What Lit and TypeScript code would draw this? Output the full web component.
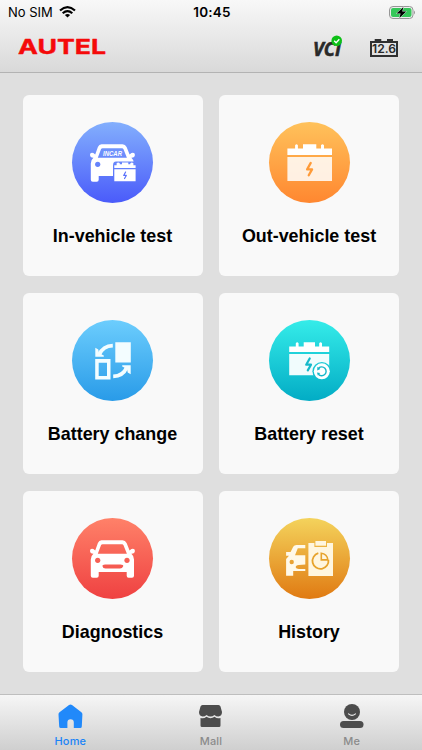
import { LitElement, html, css, svg } from "lit";
import { customElement } from "lit/decorators.js";

const bolt = (x: number, y: number, color: string, s = 1) => svg`
  <path transform="translate(${x} ${y}) scale(${s})" d="M1.2-6.5 L-2.6 .3 H2.6 L-.9 6.5" fill="none" stroke=${color} stroke-width="2.4" stroke-linecap="round" stroke-linejoin="round"/>`;

const carFront = svg`
  <path fill="#fff" fill-rule="evenodd" d="M29.5 22.3 H50.5 Q53.4 22.3 54.6 25 L57.6 32.4 L59.4 31 Q62.9 30.2 62.9 32.8 Q62.9 35.7 59.4 35.7 Q62 37.8 62 41.5 V57.8 Q62 59.7 60 59.7 H56.6 Q54.7 59.7 54.7 57.8 V53.9 H26.7 V57.8 Q26.7 59.7 24.7 59.7 H20.8 Q18.8 59.7 18.8 57.8 V41.5 Q18.8 37.8 21.4 35.7 Q18 35.7 18 32.8 Q18 30.2 21.4 31 L23.2 32.4 L25.9 25 Q27 22.3 29.5 22.3 Z M30.6 26.2 Q29.4 26.2 29 27.2 L25.8 35.8 H54.9 L51.5 27.2 Q51.1 26.2 50 26.2 Z"/>`;

const swapArrow = svg`
  <path d="M40.8 25.7 Q31 26 27.3 34.6" fill="none" stroke="#f3fdff" stroke-width="3.7"/>
  <path d="M23.3 27.8 L26.3 29.4 L27 33 L31.8 35.4 V36.8 H23.3Z" fill="#f3fdff"/>`;

const icons = [
  svg`${carFront}
    <circle cx="25.7" cy="42.3" r="2.6" fill="url(#g0)"/>
    <text class="incar" x="31" y="34" textLength="19" lengthAdjust="spacingAndGlyphs">INCAR</text>
    <path d="M41 43.5 Q41 39.6 44 39.6 H65 V61 H41 Z" fill="url(#g0)"/>
    <path d="M42.3 43.2 H44.6 V41.2 Q46.2 39.6 47.8 41.2 V42.2 H50 V40.6 H56.3 V42.2 H58.3 V41.2 Q59.8 39.6 61.4 41.2 V43.2 H63.6 V46.1 H42.3Z M42.3 47.2 H63.6 V59.2 H42.3Z" fill="#fff"/>
    ${bolt(53, 53.3, "#5a72fb", 0.5)}`,
  svg`<path fill="#fff" d="M18.4 26.6 H26.1 V23.2 Q27.5 21.4 28.9 23.2 V26.6 H34 V22.3 H47.3 V26.6 H52 V23.2 Q53.5 21.4 55 23.2 V26.6 H63 V33 H18.4Z"/>
    <path fill="#fff" fill-opacity=".85" d="M18.4 34.9 H63 V59 H18.4Z"/>
    ${bolt(40.6, 47.1, "#ff9b39", 0.95)}`,
  svg`<path fill="#f3fdff" fill-rule="evenodd" d="M43.3 22.3 H58.8 V42.5 H43.3Z M23.2 39 H38.5 V59.6 H23.2Z M26.7 42.8 V56 H35 V42.8Z"/>
    ${swapArrow}<g transform="rotate(180 41 41)">${swapArrow}</g>`,
  svg`<path fill="#fff" d="M20.2 26.6 H26.8 V23.2 Q28.2 21.4 29.6 23.2 V26.6 H34.7 V22.3 H46 V26.6 H50.2 V23.2 Q51.6 21.4 53 23.2 V26.6 H60.2 V32 H20.2Z"/>
    <path fill="#fff" fill-opacity=".94" d="M20.2 34 H60.2 V55.2 H20.2Z"/>
    ${bolt(39.6, 44.4, "#16b9ca", 0.92)}
    <circle cx="52.8" cy="51.3" r="9.4" fill="url(#g3)"/>
    <circle cx="52.8" cy="51.3" r="8" fill="#fff"/>
    <path d="M49.6 48.2 A4.4 4.4 0 1 1 49.4 54.2" fill="none" stroke="#16b6c9" stroke-width="1.4"/>
    <path d="M48.2 50.4 L48.4 46.8 L51.4 49Z M48 52.4 L51.2 53 L48.8 55.6Z" fill="#16b6c9"/>`,
  svg`${carFront}<circle cx="25.7" cy="42.3" r="2.6" fill="url(#g4)"/><circle cx="55" cy="42.3" r="2.6" fill="url(#g4)"/>
    <path d="M33 46.5 H48.5 Q51.7 46.5 51.2 48.2 Q50.4 50.6 48 50.6 H33.5 Q30.9 50.6 30.5 48.2 Q30.2 46.5 33 46.5Z" fill="url(#g4)"/>`,
  svg`<path fill="#fff9e9" fill-rule="evenodd" d="M36.3 27 V30.2 H28.8 L26 37.2 H36.3 V46.6 L29.7 47 Q26.6 47.5 26.7 49.2 Q27 51 30 51 H36.3 V53 H24.2 V57.8 H17.1 V41 L20 37.8 H17.1 V34 H21.6 L24.2 28.8 Q25.2 27 27.5 27Z M20.5 44 a2.2 2.2 0 1 0 4.4 0 a2.2 2.2 0 1 0 -4.4 0"/>
    <path fill="#fff6df" d="M39.4 25 H45.4 V29 H58 V25 H64 V58 H39.4Z"/>
    <path fill="#fff6df" d="M46.4 23 H57 V27.7 H46.4Z"/>
    <path d="M49.3 35.2 A8 8 0 1 0 59.4 41.8" fill="none" stroke="#e7a32b" stroke-width="1.8"/>
    <path d="M52.3 35.2 V41.9 H58.8 A7 7 0 0 0 52.3 35.2Z" fill="none" stroke="#e7a32b" stroke-width="1.6"/>`,
];

const tiles = [
  ["In-vehicle test", "#83affd", "#4a5bfa"],
  ["Out-vehicle test", "#ffc25b", "#ff8730"],
  ["Battery change", "#6ccdfd", "#299be8"],
  ["Battery reset", "#35ece9", "#02acc5"],
  ["Diagnostics", "#ff8169", "#ef4141"],
  ["History", "#f4d35c", "#e07a12"],
];

@customElement("app-root")
export class AppRoot extends LitElement {
  static styles = css`
    :host { display: flex; flex-direction: column; width: 422px; height: 750px; overflow: hidden; background: #dfdfdf; font-family: "Liberation Sans", Arial, sans-serif; color: #000; }
    svg { display: block; overflow: visible; flex: none; }
    .top { height: 73px; box-sizing: border-box; border-bottom: 1px solid #b3b3b3; background: linear-gradient(#f8f8f8, #d9d9d9); }
    .status { display: grid; grid-template-columns: 1fr auto 1fr; height: 24px; align-items: center; padding: 0 6px 0 8px; font: 13px Inter, sans-serif; }
    .sim { display: flex; align-items: center; gap: 6px; }
    .clock { font-weight: 600; font-size: 13.5px; letter-spacing: .2px; }
    .battery { justify-self: end; }
    .brand { display: flex; height: 48px; align-items: flex-start; padding: 10px 23px 0 18px; }
    .space { flex: 1; }
    .logo { font: 700 20.5px Inter, sans-serif; fill: #f50a0a; stroke: #f50a0a; stroke-width: .4px; stroke-linejoin: round; }
    .vci { font: italic 700 20px "Open Sans", sans-serif; fill: #292929; stroke: #292929; stroke-width: .6px; }
    .volt { font: 600 11.8px Inter, sans-serif; fill: #292929; }
    .incar { font: italic 700 6.6px "Liberation Sans", sans-serif; fill: #fff; }
    .grid { display: grid; grid-template-columns: 180px 180px; grid-auto-rows: 181px; gap: 17px 16.5px; padding: 22px 0 0 22.5px; flex: 1; align-content: start; }
    .tile { border-radius: 6px; background: #f9f9f9; display: flex; flex-direction: column; align-items: center; padding-top: 27px; box-sizing: border-box; }
    .label { margin-top: 23px; font-size: 17.9px; font-weight: 700; line-height: 21px; white-space: nowrap; }
    .tabs { display: grid; grid-template-columns: repeat(3, 1fr); height: 56px; box-sizing: border-box; border-top: 1px solid #bebebe; background: linear-gradient(#f6f6f6, #cfcfcf); }
    .tab { display: flex; flex-direction: column; align-items: center; padding-top: 9px; font: 500 11px/14px Inter, sans-serif; color: #8b8b8b; gap: 5px; letter-spacing: .2px; }
    .active { color: #1b84f7; }
  `;

  render() {
    return html`
      <header class="top">
        <div class="status">
          <div class="sim">No SIM
            <svg width="17" height="12" viewBox="0 0 17 12" fill="none" stroke="#000" stroke-width="2.2"><path d="M1 4.5 Q8.5 -2.2 16 4.5 M3.7 7.3 Q8.5 3 13.3 7.3"/><path d="M8.5 11.5 L5.9 9 Q8.5 6.9 11.1 9Z" fill="#000" stroke="none"/></svg>
          </div>
          <div class="clock">10:45</div>
          <svg class="battery" width="27" height="13" viewBox="0 0 27 13"><rect x=".5" y=".5" width="23.5" height="12" rx="3.5" fill="#eee" stroke="#969696"/><rect x="2" y="2" width="20.5" height="9" rx="2" fill="#35c759"/><path d="M25 4.5 Q27 6.5 25 8.5Z" fill="#969696"/><path d="M14.4 1 L7.5 7.4 H11.6 L10.4 12 L17.3 5.6 H13.2Z" fill="#000" stroke="#f4f4f4" stroke-width=".8" paint-order="stroke"/></svg>
        </div>
        <div class="brand">
          <svg width="89" height="25"><text class="logo" x="0" y="20" textLength="88" lengthAdjust="spacingAndGlyphs">AUTEL</text></svg>
          <div class="space"></div>
          <svg width="92" height="28" viewBox="0 0 92 28">
            <text class="vci" x="6" y="22.2" textLength="28" lengthAdjust="spacingAndGlyphs">VCI</text>
            <circle cx="29.7" cy="6.7" r="5.3" fill="#0dc016"/><path d="M27.2 6.8 L29.1 8.7 L32.3 5.2" fill="none" stroke="#fff" stroke-width="1.4"/>
            <path d="M64 8 H90 V22 H64Z" fill="none" stroke="#303030" stroke-width="2"/><path d="M67.7 5 H74.3 V8 H67.7Z M80 5 H86 V8 H80Z" fill="#303030"/>
            <text class="volt" x="65" y="19.3" textLength="24" lengthAdjust="spacingAndGlyphs">12.6</text>
          </svg>
        </div>
      </header>
      <main class="grid">${tiles.map(([label, from, to], i) => html`
        <div class="tile">
          <svg width="81" height="81" viewBox="0 0 81 81"><defs><linearGradient id="g${i}" gradientUnits="userSpaceOnUse" x1="0" y1="0" x2="0" y2="81"><stop stop-color=${from}/><stop offset="1" stop-color=${to}/></linearGradient></defs><circle cx="40.5" cy="40.5" r="40.5" fill="url(#g${i})"/>${icons[i]}</svg>
          <div class="label">${label}</div>
        </div>`)}
      </main>
      <nav class="tabs">
        <div class="tab active"><svg width="25" height="25" viewBox="0 0 25 25"><path d="M11 1 Q12.5 -.2 14 1 L23.4 8.3 Q24.5 9.2 24.4 10.5 L23.8 22.5 Q23.7 24 22.2 24 H15.8 V18.5 Q15.8 15.3 12.6 15.3 Q9.4 15.3 9.4 18.5 V24 H2.8 Q1.3 24 1.2 22.5 L.5 10.5 Q.4 9.2 1.5 8.3Z" fill="#2189fa"/></svg>Home</div>
        <div class="tab"><svg width="25" height="25" viewBox="0 0 25 25" fill="#4c4c4c"><path d="M4.5 1 H20.5 Q22 1 22.5 2.5 L24 8 Q24 12 20.3 12.5 Q18 12.5 16.5 11 Q12.5 14 8.5 11 Q7 12.5 4.7 12.5 Q1 12 1 8 L2.5 2.5 Q3 1 4.5 1Z"/><path d="M2.5 14 Q6 15 8.4 12.8 Q12.5 15.5 16.6 12.8 Q19 15 22.5 14 V21.5 Q22.5 23 21 23 H4 Q2.5 23 2.5 21.5Z"/></svg>Mall</div>
        <div class="tab"><svg width="25" height="25" viewBox="0 0 25 25" fill="#4c4c4c"><circle cx="13" cy="8" r="8"/><rect x="1" y="17" width="23.5" height="7" rx="3.5"/><path d="M9.5 9.8 Q13 13 16.5 9.8" fill="none" stroke="#e9e9e9" stroke-width="1.1" stroke-linecap="round"/></svg>Me</div>
      </nav>`;
  }
}
